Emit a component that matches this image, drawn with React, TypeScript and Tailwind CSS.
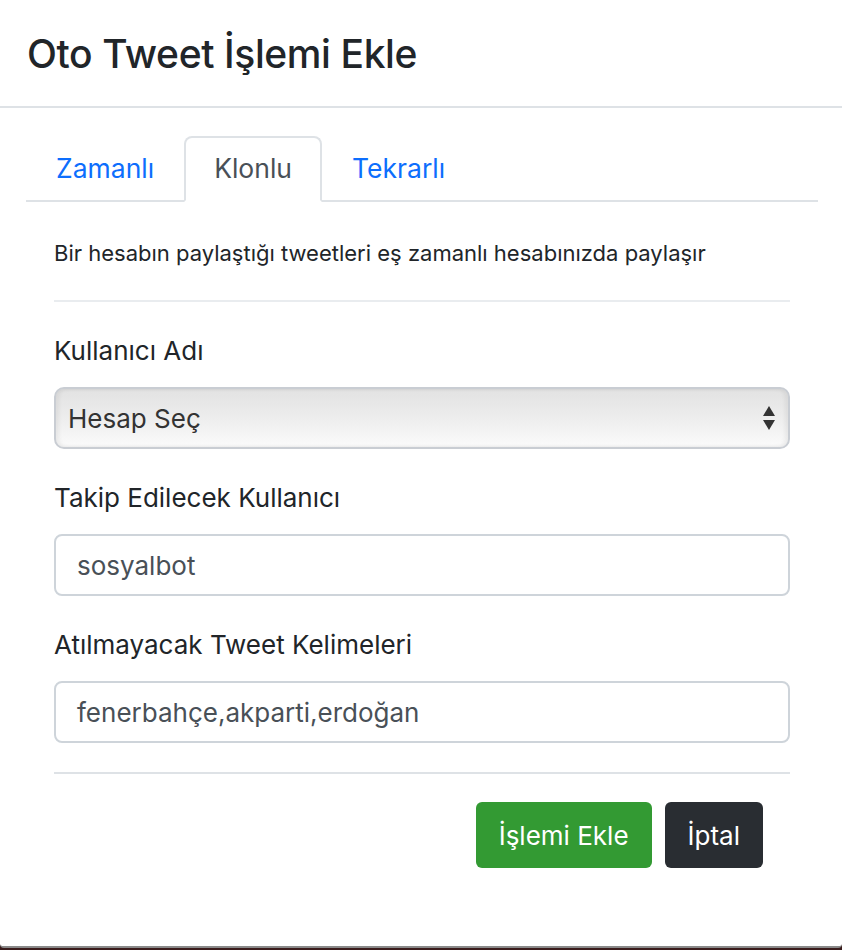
import { useState } from "react"

const tabs = ["Zamanlı", "Klonlu", "Tekrarlı"]

function Field(props: { label: string; children: React.ReactNode }) {
  return (
    <div className="mt-[31px]">
      <label className="block text-[26px] leading-[36px] text-[#212529]">{props.label}</label>
      <div className="mt-[18px]">{props.children}</div>
    </div>
  )
}

function TextInput(props: { value: string }) {
  return (
    <div className="flex h-[62px] items-center rounded-[8px] border-2 border-[#ced4da] bg-white px-[21px] text-[26px] text-[#495057]">
      {props.value}
    </div>
  )
}

export default function App() {
  const [active, setActive] = useState(1)

  return (
    <div className="h-[950px] w-[842px] overflow-hidden bg-[#3a1c1c] font-['Inter','Liberation_Sans',sans-serif] text-[#212529]">
      <div className="h-[948px] w-full rounded-b-[4px] border-b-2 border-[#8a8a8a] bg-white">
        <div className="flex h-[108px] items-center border-b-2 border-[#dee2e6] pl-[27px]">
          <h5 className="text-[39px] font-medium leading-none tracking-[-0.01em] text-[#212529]">
            Oto Tweet İşlemi Ekle
          </h5>
        </div>

        <div className="pl-[26px] pr-[24px] pt-[28px]">
          <ul className="flex border-b-2 border-[#dee2e6]">
            {tabs.map((tab, index) => (
              <li key={tab} className="-mb-[2px]">
                <button
                  onClick={() => setActive(index)}
                  className={
                    index === active
                      ? "flex h-[66px] items-center rounded-t-[8px] border-2 border-[#dee2e6] border-b-white bg-white px-[28px] text-[26.5px] text-[#495057]"
                      : "flex h-[66px] items-center rounded-t-[8px] border-2 border-transparent px-[28px] text-[26.5px] text-[#0d6efd]"
                  }
                >
                  {tab}
                </button>
              </li>
            ))}
          </ul>

          <div className="px-[28px]">
            <p className="mt-[38px] text-[22px] leading-[26px] text-[#212529]">
              Bir hesabın paylaştığı tweetleri eş zamanlı hesabınızda paylaşır
            </p>
            <hr className="mt-[34px] border-t-2 border-[#e9ecef]" />

            <Field label="Kullanıcı Adı">
              <div className="relative flex h-[62px] items-center rounded-[10px] border-2 border-[#c9cdd3] bg-gradient-to-b from-[#e2e2e2] via-[#ededed] to-[#fbfbfb] px-[12px] text-[26px] text-[#333] shadow-[inset_3px_0_4px_rgba(0,0,0,0.06),inset_-3px_0_4px_rgba(0,0,0,0.06)]">
                Hesap Seç
                <svg className="absolute right-[12px] top-1/2 -translate-y-1/2" width="14" height="26" viewBox="0 0 14 26">
                  <path d="M7 1 L13 11 L1 11 Z" fill="#333" />
                  <path d="M1 15 L13 15 L7 25 Z" fill="#333" />
                </svg>
              </div>
            </Field>

            <Field label="Takip Edilecek Kullanıcı">
              <TextInput value="sosyalbot" />
            </Field>

            <Field label="Atılmayacak Tweet Kelimeleri">
              <TextInput value="fenerbahçe,akparti,erdoğan" />
            </Field>

            <hr className="mt-[29px] border-t-2 border-[#dee2e6]" />

            <div className="mt-[28px] flex justify-end gap-[13px] pr-[27px]">
              <button className="h-[66px] rounded-[6px] bg-[#339a33] px-[23px] text-[26px] text-white">
                İşlemi Ekle
              </button>
              <button className="h-[66px] rounded-[6px] bg-[#292d32] px-[23px] text-[26px] text-white">
                İptal
              </button>
            </div>
          </div>
        </div>
      </div>
    </div>
  )
}
